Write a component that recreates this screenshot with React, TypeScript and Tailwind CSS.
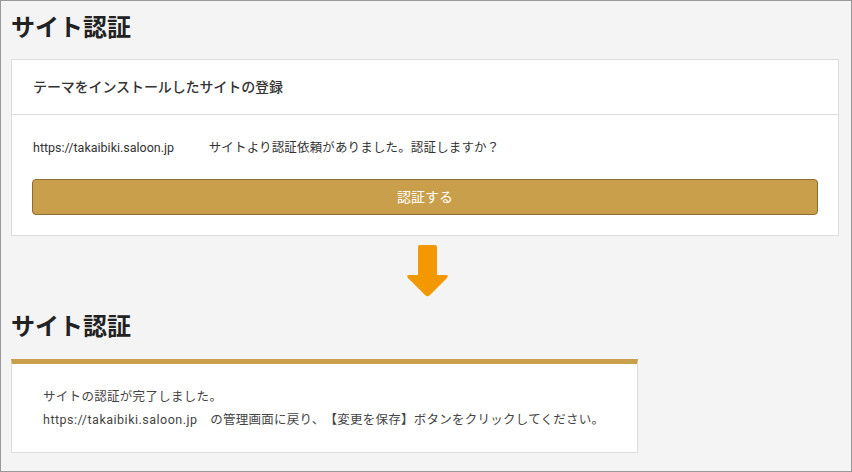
import React from "react";

const font = { fontFamily: 'Roboto, "Noto Sans CJK JP", sans-serif' };

export default function App() {
  return (
    <div
      className="w-[852px] h-[472px] border border-[#999] bg-[#f4f4f4] pl-[10px] pr-[12px] overflow-hidden text-[#333] [text-spacing-trim:space-all]"
      style={font}
    >
      <h1 className="mt-[9px] text-[24px] leading-[36px] font-bold text-[#222]">サイト認証</h1>
      <div className="mt-[13px] bg-white border border-[#ddd]">
        <div className="h-[55px] flex items-center px-[21px] border-b border-[#ddd] text-[14px] font-medium text-[#333] tracking-[-0.1px]">
          テーマをインストールしたサイトの登録
        </div>
        <div className="px-[20px] pt-[23px] pb-[20px]">
          <p className="text-[12.5px] leading-[20px] text-[#333] pl-[1px] whitespace-nowrap">
            <span>https://takaibiki.saloon.jp</span>
            <span className="ml-[22px] tracking-[0.15px]">　サイトより認証依頼がありました。認証しますか？</span>
          </p>
          <button className="mt-[21px] w-full h-[36px] bg-[#c99f4b] border border-[#8e6d30] rounded-[4px] text-white text-[14px]">
            認証する
          </button>
        </div>
      </div>
      <div className="flex justify-center mt-[8px] pl-[3px]">
        <svg width="44" height="54" viewBox="0 0 44 54">
          <path
            d="M13 3 Q13 1 15 1 L30 1 Q32 1 32 3 L32 31 L41 31 Q44 31 42 34 L25 51 Q22.5 53.5 20 51 L3 34 Q1 31 4 31 L13 31 Z"
            fill="#f39800"
          />
        </svg>
      </div>
      <h1 className="mt-[11px] text-[24px] leading-[36px] font-bold text-[#222]">サイト認証</h1>
      <div className="mt-[14px] w-[627px] bg-white border border-[#ddd] border-t-[5px] border-t-[#c99f4b] pl-[31px] pt-[21px] pb-[21px] text-[12.5px] leading-[23px] text-[#444] whitespace-nowrap">
        <p className="tracking-[0.3px]">サイトの認証が完了しました。</p>
        <p>
          <span className="tracking-[0.5px]">https://takaibiki.saloon.jp</span>
          <span className="tracking-[0.25px]">　の管理画面に戻り、【変更を保存】ボタンをクリックしてください。</span>
        </p>
      </div>
    </div>
  );
}
